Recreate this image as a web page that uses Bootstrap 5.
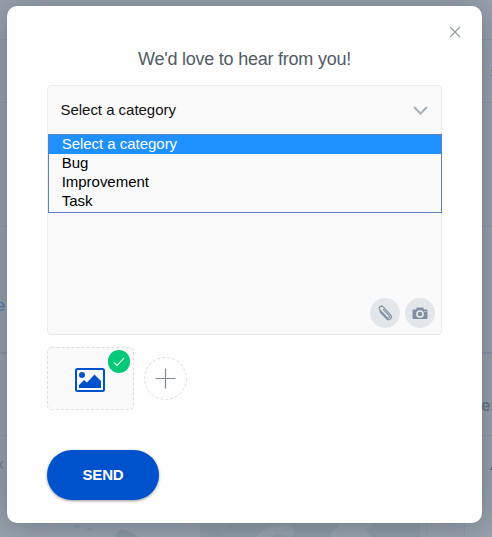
<!DOCTYPE html>
<html lang="en">
<head>
<meta charset="utf-8">
<meta name="viewport" content="width=device-width, initial-scale=1">
<title>Feedback</title>
<link href="https://cdn.jsdelivr.net/npm/bootstrap@5.3.0/dist/css/bootstrap.min.css" rel="stylesheet">
<style>
body{font-family:"Liberation Sans",Arial,sans-serif;height:537px;background:#98a2ad;overflow:hidden;padding:6.4px 10px 13px 7px}
.backdrop-art{left:0;top:0;z-index:0}
.feedback{height:517px;border-radius:10px;background:#fefefe;box-shadow:0 2px 30px rgba(70,78,92,.5);padding:0 40px;z-index:1}
.close-btn{right:21px;top:20px;line-height:0}
.heading{font-size:18px;line-height:22px;color:#525c66;padding-top:41.600px;margin:0 0 15px;letter-spacing:-.23px}
.entry{height:250px;border:1px solid #ebebec;border-radius:4px;background:#fafafa}
.picker{height:48px;padding:0 13px 0 12.5px;font-size:15px;color:#111;letter-spacing:-.03px}
.options{top:48px;left:0;right:-1px;height:79px;border:1px solid #5b82bd;background:#fafafa;font-size:15px;line-height:17px;color:#000;letter-spacing:-.03px}
.options li{padding-left:12.700px;height:19px}
.options .chosen{background:#1e90ff;color:#fff}
.tool{width:30px;height:30px;background:#e3e7ea}
.thumb{width:87px;height:63px}
.tick{right:4px;top:3.500px;width:22.500px;height:22.500px;background:#03c977}
.send{width:112px;height:50px;border:0;border-radius:25px;background:#0052cc;color:#fff;font-size:15px;font-weight:700;box-shadow:0 1px 3px rgba(0,0,0,.4);margin-top:40px;letter-spacing:-.2px}
</style>
</head>
<body class="position-relative">
<svg class="backdrop-art position-absolute" width="492" height="537" aria-hidden="true">
<path d="M0 39.5H492M0 102.5H492M0 226.5H492M0 435.5H492" stroke="#8d9aa8"/>
<path d="M0 353H492" stroke="#8896a8" stroke-width="2"/>
<path d="M200 523H420V537H200Z" fill="#8e9ca6"/>
<path d="M74 526l6-2-2 4ZM85 529l8-1-3 3ZM115 537q2-8 8-8l8 3 7 5ZM214 532l4-1v3ZM227 525l6-1-2 4Z" fill="#8a97a3"/>
<path d="M256 537q8-10 20-11l12-3q10 8 3 14l-15-3-4 3ZM331 537q0-7 7-9v-5h35q-3 5-7 7l7 7Z" fill="#98a3ad"/>
<path d="M426.500 523V537M464.500 523V537" stroke="#8c9bac"/>
<g font-family="Liberation Sans,Arial,sans-serif"><text x="-9" y="311" font-size="17" fill="#4876b5">te</text><text x="-4" y="469" font-size="15" fill="#737d88">x</text><text x="481" y="411" font-size="17" font-weight="700" fill="#697482">er</text><text x="490.500" y="77" font-size="17" fill="#737d88">s</text><path d="M490 470l2-4v4Z" fill="#56606b"/></g>
</svg>
<main class="feedback position-relative">
<button class="close-btn btn p-0 border-0 position-absolute" type="button" aria-label="Close"><svg width="12" height="12" viewBox="0 0 12 12" stroke="#929daa" stroke-width="1.15"><path d="M1 1l10 10M11 1L1 11"/></svg></button>
<h1 class="heading text-center fw-normal">We'd love to hear from you!</h1>
<section class="entry position-relative d-flex flex-column justify-content-between">
<div class="picker d-flex align-items-center justify-content-between"><span>Select a category</span><svg width="15" height="10" viewBox="0 0 15 10" fill="none" stroke="#a9b1b9" stroke-width="2.2"><path d="M1 2L7.500 8.500 14 2"/></svg></div>
<ul class="options list-unstyled position-absolute mb-0"><li class="chosen">Select a category</li><li>Bug</li><li>Improvement</li><li>Task</li></ul>
<div class="d-flex justify-content-end" style="gap:5px;padding:0 6px 6px">
<button class="tool btn p-0 border-0 rounded-circle d-flex align-items-center justify-content-center" type="button" aria-label="Attach"><svg width="18" height="18" viewBox="0 0 18 18"><path transform="rotate(-43 9 9)" d="M6.200 4.500V14.200a2.800 2.800 0 0 0 5.600 0V3.200a2.200 2.200 0 0 0-4.400 0V13.700a1.400 1.400 0 0 0 2.800 0V5.500" fill="none" stroke="#7e8fa0" stroke-width="1.150" stroke-linecap="round"/></svg></button>
<button class="tool btn p-0 border-0 rounded-circle d-flex align-items-center justify-content-center" type="button" aria-label="Take a screenshot"><svg width="16" height="14" viewBox="0 0 16 14"><path d="M1.500 3.500H4l.7-2h6.600l.7 2h2.500q1 0 1 1V12q0 1-1 1h-13q-1 0-1-1V4.500q0-1 1-1Z" fill="#8090a2"/><circle cx="8" cy="8" r="3.100" fill="#8090a2" stroke="#e9edef" stroke-width="1.500"/><path d="M12.500 5.500h2" stroke="#c1cad2"/></svg></button>
</div>
</section>
<div class="d-flex align-items-center" style="gap:10px;margin-top:12px">
<div class="thumb position-relative">
<svg width="87" height="63" viewBox="0 0 87 63"><rect x=".5" y=".5" width="86" height="62" rx="4" fill="#fafafa" stroke="#dddddf" stroke-dasharray="3 2"/><rect x="29" y="22" width="28" height="22" rx="1.500" fill="#fafafa" stroke="#0052cc" stroke-width="2"/><circle cx="35" cy="28" r="3" fill="#0052cc"/><path d="M32 41v-3l5-5 3 2.500 7.500-8 6.500 6.500v7Z" fill="#0052cc"/></svg>
<span class="tick position-absolute rounded-circle d-flex align-items-center justify-content-center"><svg width="12" height="10" viewBox="0 0 12 10"><path d="M1 5.500L4 8.500 11 1" fill="none" stroke="#d6fae9" stroke-width="1.100"/></svg></span>
</div>
<button class="btn p-0 border-0 d-flex" type="button" aria-label="Add"><svg width="43" height="43" viewBox="0 0 43 43" fill="none"><circle cx="21.500" cy="21.500" r="21" stroke="#dddddf" stroke-dasharray="3 2"/><path d="M11.500 21.500h20M21.500 11.500v20" stroke="#7f8b98" stroke-width="1.200"/></svg></button>
</div>
<button class="send btn d-flex align-items-center justify-content-center" type="button">SEND</button>
</main>
<script src="https://cdn.jsdelivr.net/npm/bootstrap@5.3.0/dist/js/bootstrap.bundle.min.js"></script>
</body>
</html>
